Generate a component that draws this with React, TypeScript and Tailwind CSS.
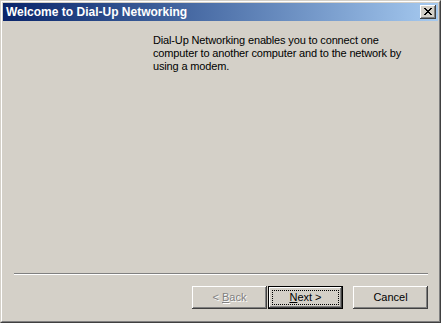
import React from "react";

const raised =
  "shadow-[inset_-1px_-1px_#404040,inset_1px_1px_#ffffff,inset_-2px_-2px_#808080,inset_2px_2px_#d4d0c8]";

function CloseGlyph() {
  // 8x7 pixel "X" as in the classic caption button
  const rows = ["11000011", "01100110", "00111100", "00011000", "00111100", "01100110", "11000011"];
  return (
    <svg width="8" height="7" viewBox="0 0 8 7" shapeRendering="crispEdges">
      {rows.map((r, y) =>
        r.split("").map((c, x) => (c === "1" ? <rect key={`${x}-${y}`} x={x} y={y} width="1" height="1" fill="#000" /> : null))
      )}
    </svg>
  );
}

function WizardButton({
  children,
  isDefault = false,
  disabled = false,
}: {
  children: React.ReactNode;
  isDefault?: boolean;
  disabled?: boolean;
}) {
  if (isDefault) {
    return (
      <div className="h-[23px] w-[75px] border border-black bg-[#d4d0c8] shadow-[inset_-1px_-1px_#404040,inset_1px_1px_#ffffff,inset_-2px_-2px_#808080]">
        <div className="m-[3px] flex h-[15px] items-center justify-center border border-dotted border-black text-[11px] text-black">
          <span className="whitespace-pre">{children}</span>
        </div>
      </div>
    );
  }
  return (
    <div
      className={`flex h-[23px] w-[75px] items-center justify-center bg-[#d4d0c8] text-[11px] ${raised} ${
        disabled ? "text-[#808080] [text-shadow:1px_1px_0_#ffffff]" : "text-black"
      }`}
    >
      <span className="whitespace-pre">{children}</span>
    </div>
  );
}

export default function App() {
  return (
    <div className="h-[323px] w-[441px] border border-t-[#d4d0c8] border-l-[#d4d0c8] border-b-[#404040] border-r-[#404040] bg-[#d4d0c8] font-['Liberation_Sans',Arial,sans-serif]">
      <div className="flex h-full w-full flex-col border border-t-white border-l-white border-b-[#808080] border-r-[#808080] p-px">
        {/* Caption */}
        <div className="flex h-[18px] shrink-0 items-center justify-between bg-gradient-to-r from-[#0a246a] to-[#a6caf0] pl-[3px] pr-[2px]">
          <span className="text-[12px] font-bold leading-none text-white">Welcome to Dial-Up Networking</span>
          <div className={`h-[14px] w-[16px] bg-[#d4d0c8] pl-[4px] pt-[3px] ${raised}`}>
            <CloseGlyph />
          </div>
        </div>

        {/* Body */}
        <div className="flex-1 pl-[150px] pt-[13px]">
          <p className="text-[11px] leading-[13px] tracking-[-0.15px] text-black">
            Dial-Up Networking enables you to connect one
            <br />
            computer to another computer and to the network by
            <br />
            using a modem.
          </p>
        </div>

        {/* Separator */}
        <div className="ml-[11px] mr-[10px] h-[2px] shrink-0 border-t border-t-[#808080] border-b border-b-white" />

        {/* Buttons */}
        <div className="flex shrink-0 justify-end pb-[11px] pr-[10px] pt-[11px]">
          <div className="flex gap-px">
            <WizardButton disabled>
              {"< "}
              <span className="underline">B</span>ack
            </WizardButton>
            <WizardButton isDefault>
              <span className="underline">N</span>
              {"ext >"}
            </WizardButton>
          </div>
          <div className="ml-[10px]">
            <WizardButton>Cancel</WizardButton>
          </div>
        </div>
      </div>
    </div>
  );
}
